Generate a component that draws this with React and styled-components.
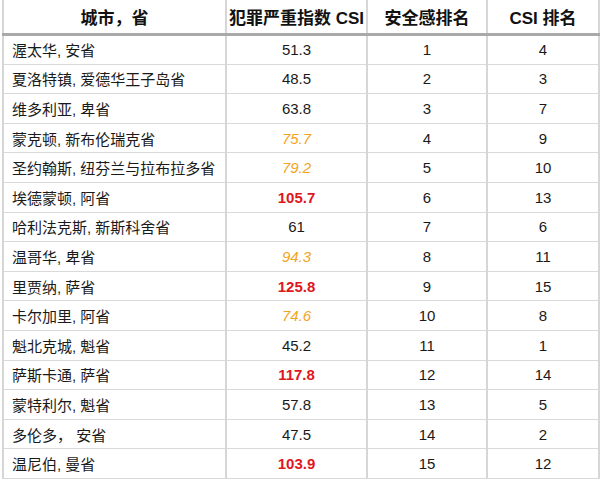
import React from 'react';
import styled, { createGlobalStyle } from 'styled-components';

const GlobalStyle = createGlobalStyle`
  html, body {
    margin: 0;
    padding: 0;
    background: #ffffff;
  }
  body {
    font-family: "Liberation Sans", "Noto Sans CJK SC", sans-serif;
    color: #1a1a1a;
  }
`;

const Page = styled.div`
  width: 600px;
  height: 482px;
  overflow: hidden;
  padding-left: 2px;
  box-sizing: border-box;
`;

const Table = styled.table`
  border-collapse: collapse;
  table-layout: fixed;
  width: 596px;
  margin-top: -2px;
`;

const HeadCell = styled.th`
  height: 34px;
  padding: 0;
  font-size: 17px;
  font-weight: bold;
  text-align: center;
  color: #111;
  border-left: 2px solid #d6d6d6;
  border-right: 2px solid #d6d6d6;
  border-top: 1px solid #d6d6d6;
  border-bottom: 3px solid #a9a9a9;
`;

const Row = styled.tr`
  height: 29.6px;
`;

const Cell = styled.td`
  padding: 0 0 0 ${(p) => (p.$left ? '8px' : '0')};
  font-size: 15px;
  text-align: ${(p) => (p.$left ? 'left' : 'center')};
  border-left: 2px solid #d6d6d6;
  border-right: 2px solid #d6d6d6;
  border-bottom: 1px solid #d9d9d9;
  white-space: nowrap;
`;

const Value = styled.span`
  color: ${(p) => (p.$level === 'high' ? '#e0161e' : p.$level === 'mid' ? '#f2a41c' : '#1a1a1a')};
  font-weight: ${(p) => (p.$level === 'high' ? 'bold' : 'normal')};
  font-style: ${(p) => (p.$level === 'mid' ? 'italic' : 'normal')};
`;

const rows = [
  ['渥太华, 安省', '51.3', '', 1, 4],
  ['夏洛特镇, 爱德华王子岛省', '48.5', '', 2, 3],
  ['维多利亚, 卑省', '63.8', '', 3, 7],
  ['蒙克顿, 新布伦瑞克省', '75.7', 'mid', 4, 9],
  ['圣约翰斯, 纽芬兰与拉布拉多省', '79.2', 'mid', 5, 10],
  ['埃德蒙顿, 阿省', '105.7', 'high', 6, 13],
  ['哈利法克斯, 新斯科舍省', '61', '', 7, 6],
  ['温哥华, 卑省', '94.3', 'mid', 8, 11],
  ['里贾纳, 萨省', '125.8', 'high', 9, 15],
  ['卡尔加里, 阿省', '74.6', 'mid', 10, 8],
  ['魁北克城, 魁省', '45.2', '', 11, 1],
  ['萨斯卡通, 萨省', '117.8', 'high', 12, 14],
  ['蒙特利尔, 魁省', '57.8', '', 13, 5],
  ['多伦多， 安省', '47.5', '', 14, 2],
  ['温尼伯, 曼省', '103.9', 'high', 15, 12],
];

export default function App() {
  return (
    <Page>
      <GlobalStyle />
      <Table>
        <colgroup>
          <col style={{ width: 223 }} />
          <col style={{ width: 141 }} />
          <col style={{ width: 120 }} />
          <col style={{ width: 112 }} />
        </colgroup>
        <thead>
          <tr>
            <HeadCell>城市，省</HeadCell>
            <HeadCell>犯罪严重指数 CSI</HeadCell>
            <HeadCell>安全感排名</HeadCell>
            <HeadCell>CSI 排名</HeadCell>
          </tr>
        </thead>
        <tbody>
          {rows.map(([city, csi, level, safe, rank]) => (
            <Row key={city}>
              <Cell $left>{city}</Cell>
              <Cell>
                <Value $level={level}>{csi}</Value>
              </Cell>
              <Cell>{safe}</Cell>
              <Cell>{rank}</Cell>
            </Row>
          ))}
        </tbody>
      </Table>
    </Page>
  );
}
